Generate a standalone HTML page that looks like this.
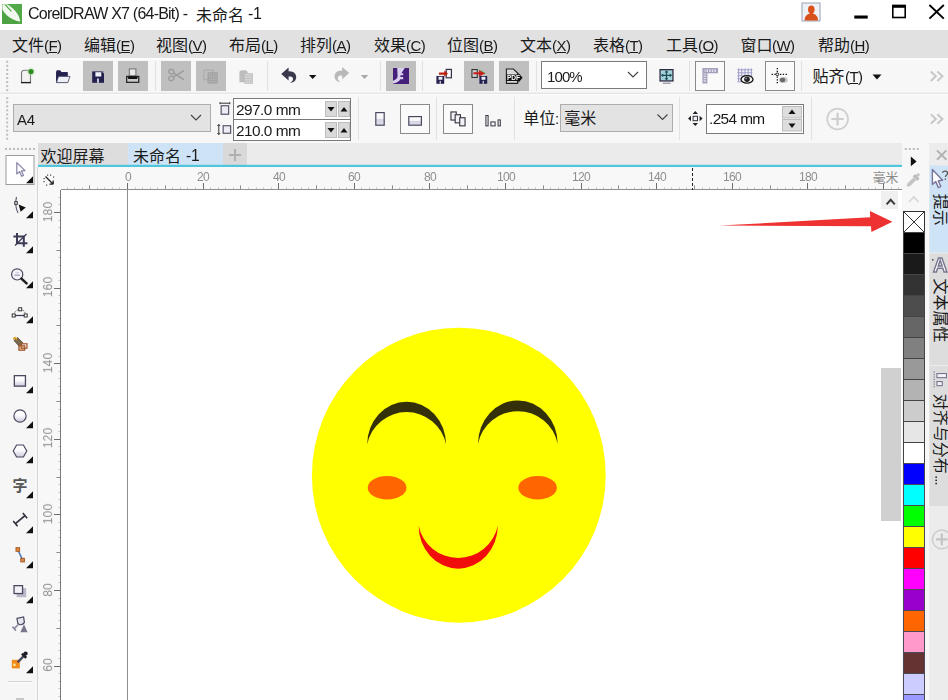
<!DOCTYPE html>
<html><head><meta charset="utf-8"><title>CorelDRAW X7</title>
<style>
html,body{margin:0;padding:0;background:#fff;}
#root{position:relative;width:948px;height:700px;overflow:hidden;font-family:"Liberation Sans",sans-serif;background:#fff;}
#root svg.bg{position:absolute;left:0;top:0;}
#root svg.bg text{font-family:"Liberation Sans","Noto Sans CJK SC",sans-serif;}
.t{position:absolute;will-change:transform;white-space:nowrap;font-family:"Liberation Sans",sans-serif;}
</style></head><body>
<div id="root">
<svg class="bg" width="948" height="700" viewBox="0 0 948 700">
<rect x="0" y="0" width="948" height="30" fill="#ffffff" />
<rect x="0" y="30" width="948" height="28" fill="#e1e1e1" />
<rect x="0" y="58" width="948" height="35" fill="#f7f7f7" />
<rect x="0" y="93" width="948" height="50" fill="#f7f7f7" />
<line x1="0" y1="93.3" x2="948" y2="93.3" stroke="#dcdcdc" stroke-width="1" />
<line x1="0" y1="94.4" x2="948" y2="94.4" stroke="#fcfcfc" stroke-width="1" />
<line x1="0" y1="59" x2="948" y2="59" stroke="#fcfcfc" stroke-width="2" />
<rect x="0" y="143" width="948" height="24" fill="#ebebeb" />
<rect x="38" y="143" width="90" height="22" fill="#dddddd" />
<rect x="0" y="143" width="38" height="557" fill="#f6f6f6" />
<rect x="38" y="167" width="864" height="533" fill="#ffffff" />
<rect x="902" y="143" width="26" height="557" fill="#f7f7f7" />
<rect x="928" y="143" width="20" height="557" fill="#e6e6e6" />
<rect x="2" y="4" width="20" height="20" fill="#53a947" />
<path d="M2.4 4.2 L7 4.2 C13.5 8 19.4 14 20.2 21.6 C12.5 20.4 5 15 2.4 9.2 Z" fill="#f3f9f1" />
<path d="M5.2 4.6 L11.4 11.4" fill="none" stroke="#53a947" stroke-width="1.3" />
<path d="M2 10.5 C5 16 10 20 17 21.8 L17 24 L2 24 Z" fill="#4a9c40" opacity="0.55"/>
<text x="196" y="20.8" font-size="16" fill="#1a1a1a">未命名</text>
<rect x="802.0" y="3.0" width="18" height="18" fill="#eef1f6" stroke="#9aa3b4" stroke-width="1" />
<path d="M804.6 20.6 C804.6 16.4 806.6 14.6 809.4 13.8 L813.2 13.8 C816 14.6 818 16.4 818 20.6 Z" fill="#d8501c" />
<ellipse cx="811.3" cy="9.4" rx="3.3" ry="4" fill="#dc531e"/>
<rect x="809.6" y="11.5" width="3.4" height="3.5" fill="#d8501c" />
<rect x="854.3" y="15.5" width="13.4" height="3.1" fill="#000" />
<rect x="892.8" y="5.6" width="12.4" height="11.9" fill="none" stroke="#000" stroke-width="1.6" />
<rect x="892" y="4.8" width="14" height="3" fill="#000" />
<path d="M929.4 5 L943.8 18.6 M943.8 5 L929.4 18.6" fill="none" stroke="#000" stroke-width="1.9" />
<text x="12" y="50.5" font-size="16" fill="#1a1a1a">文件</text>
<text x="84" y="50.5" font-size="16" fill="#1a1a1a">编辑</text>
<text x="156" y="50.5" font-size="16" fill="#1a1a1a">视图</text>
<text x="229" y="50.5" font-size="16" fill="#1a1a1a">布局</text>
<text x="300" y="50.5" font-size="16" fill="#1a1a1a">排列</text>
<text x="374" y="50.5" font-size="16" fill="#1a1a1a">效果</text>
<text x="447" y="50.5" font-size="16" fill="#1a1a1a">位图</text>
<text x="520" y="50.5" font-size="16" fill="#1a1a1a">文本</text>
<text x="593" y="50.5" font-size="16" fill="#1a1a1a">表格</text>
<text x="666" y="50.5" font-size="16" fill="#1a1a1a">工具</text>
<text x="740.6" y="50.5" font-size="16" fill="#1a1a1a">窗口</text>
<text x="818" y="50.5" font-size="16" fill="#1a1a1a">帮助</text>
<rect x="6.2" y="60.8" width="2" height="2" fill="#bdbdbd" />
<rect x="6.2" y="64.85" width="2" height="2" fill="#bdbdbd" />
<rect x="6.2" y="68.89999999999999" width="2" height="2" fill="#bdbdbd" />
<rect x="6.2" y="72.94999999999999" width="2" height="2" fill="#bdbdbd" />
<rect x="6.2" y="76.99999999999999" width="2" height="2" fill="#bdbdbd" />
<rect x="6.2" y="81.04999999999998" width="2" height="2" fill="#bdbdbd" />
<rect x="6.2" y="85.09999999999998" width="2" height="2" fill="#bdbdbd" />
<rect x="6.2" y="89.14999999999998" width="2" height="2" fill="#bdbdbd" />
<rect x="83" y="61" width="30" height="30" fill="#bfbfbf" />
<rect x="118" y="61" width="30" height="30" fill="#bfbfbf" />
<rect x="161" y="61" width="30" height="30" fill="#bfbfbf" />
<rect x="196" y="61" width="30" height="30" fill="#bfbfbf" />
<rect x="386" y="61" width="30" height="30" fill="#bfbfbf" />
<rect x="464" y="61" width="30" height="30" fill="#bfbfbf" />
<rect x="499" y="61" width="30" height="30" fill="#bfbfbf" />
<line x1="155.5" y1="61" x2="155.5" y2="91" stroke="#e2e2e2" stroke-width="1" />
<line x1="267.5" y1="61" x2="267.5" y2="91" stroke="#e2e2e2" stroke-width="1" />
<line x1="380.5" y1="61" x2="380.5" y2="91" stroke="#e2e2e2" stroke-width="1" />
<line x1="422.5" y1="61" x2="422.5" y2="91" stroke="#e2e2e2" stroke-width="1" />
<line x1="536.5" y1="61" x2="536.5" y2="91" stroke="#e2e2e2" stroke-width="1" />
<line x1="689.5" y1="61" x2="689.5" y2="91" stroke="#e2e2e2" stroke-width="1" />
<line x1="801.5" y1="61" x2="801.5" y2="91" stroke="#e2e2e2" stroke-width="1" />
<rect x="541.5" y="61.5" width="105" height="27" fill="#ffffff" stroke="#7a7a7a" stroke-width="1" />
<path d="M628 72 L633 77 L638 72" fill="none" stroke="#444" stroke-width="1.2" />
<rect x="695.5" y="61.5" width="29" height="29" fill="#fafafa" stroke="#8a8a8a" stroke-width="1" />
<rect x="765.5" y="61.5" width="29" height="29" fill="#fafafa" stroke="#8a8a8a" stroke-width="1" />
<text x="812.5" y="82" font-size="16" fill="#1a1a1a">贴齐</text>
<path d="M872.5 74.5 L881.5 74.5 L877 79.5 Z" fill="#111" />
<path d="M930.8 71.5 L935.8 76.3 L930.8 81 M937.4 71.5 L942.4 76.3 L937.4 81" fill="none" stroke="#c8c8c8" stroke-width="2" />
<rect x="6.2" y="97.2" width="2" height="2" fill="#bdbdbd" />
<rect x="6.2" y="101.25" width="2" height="2" fill="#bdbdbd" />
<rect x="6.2" y="105.3" width="2" height="2" fill="#bdbdbd" />
<rect x="6.2" y="109.35" width="2" height="2" fill="#bdbdbd" />
<rect x="6.2" y="113.39999999999999" width="2" height="2" fill="#bdbdbd" />
<rect x="6.2" y="117.44999999999999" width="2" height="2" fill="#bdbdbd" />
<rect x="6.2" y="121.49999999999999" width="2" height="2" fill="#bdbdbd" />
<rect x="6.2" y="125.54999999999998" width="2" height="2" fill="#bdbdbd" />
<rect x="6.2" y="129.6" width="2" height="2" fill="#bdbdbd" />
<rect x="6.2" y="133.65" width="2" height="2" fill="#bdbdbd" />
<rect x="6.2" y="137.70000000000002" width="2" height="2" fill="#bdbdbd" />
<rect x="13.5" y="104.5" width="197" height="27" fill="#e3e3e3" stroke="#adadad" stroke-width="1" />
<path d="M191 115 L196 120 L201 115" fill="none" stroke="#444" stroke-width="1.2" />
<rect x="233.5" y="98.5" width="117" height="42" fill="#ffffff" stroke="#7a7a7a" stroke-width="1" />
<line x1="233" y1="119.5" x2="351" y2="119.5" stroke="#7a7a7a" stroke-width="1" />
<rect x="325.5" y="101.5" width="11" height="15" fill="#d9d9d9" stroke="#bdbdbd" stroke-width="1" />
<rect x="338.5" y="101.5" width="11" height="15" fill="#d9d9d9" stroke="#bdbdbd" stroke-width="1" />
<path d="M327.5 107 L334.5 107 L331 111.5 Z" fill="#111" />
<path d="M340.5 111.5 L347.5 111.5 L344 107 Z" fill="#111" />
<rect x="325.5" y="122.5" width="11" height="15" fill="#d9d9d9" stroke="#bdbdbd" stroke-width="1" />
<rect x="338.5" y="122.5" width="11" height="15" fill="#d9d9d9" stroke="#bdbdbd" stroke-width="1" />
<path d="M327.5 128 L334.5 128 L331 132.5 Z" fill="#111" />
<path d="M340.5 132.5 L347.5 132.5 L344 128 Z" fill="#111" />
<line x1="358.5" y1="97" x2="358.5" y2="140" stroke="#e2e2e2" stroke-width="1" />
<line x1="436.5" y1="97" x2="436.5" y2="140" stroke="#e2e2e2" stroke-width="1" />
<line x1="514.5" y1="97" x2="514.5" y2="140" stroke="#e2e2e2" stroke-width="1" />
<line x1="679.5" y1="97" x2="679.5" y2="140" stroke="#e2e2e2" stroke-width="1" />
<line x1="811.5" y1="97" x2="811.5" y2="140" stroke="#e2e2e2" stroke-width="1" />
<rect x="400.5" y="104.5" width="29" height="29" fill="#fafafa" stroke="#8a8a8a" stroke-width="1" />
<rect x="443.5" y="104.5" width="29" height="29" fill="#fafafa" stroke="#8a8a8a" stroke-width="1" />
<text x="523.3" y="124" font-size="16" fill="#1a1a1a">单位</text>
<rect x="560.5" y="104.5" width="112" height="27" fill="#e3e3e3" stroke="#adadad" stroke-width="1" />
<text x="564.3" y="124" font-size="16" fill="#1a1a1a">毫米</text>
<path d="M657.5 114.5 L662.5 119.5 L667.5 114.5" fill="none" stroke="#444" stroke-width="1.2" />
<rect x="706.5" y="104.5" width="97" height="29" fill="#ffffff" stroke="#7a7a7a" stroke-width="1" />
<rect x="782.5" y="106.5" width="19" height="11.5" fill="#dddddd" stroke="#bdbdbd" stroke-width="1" />
<rect x="782.5" y="119.5" width="19" height="11.5" fill="#dddddd" stroke="#bdbdbd" stroke-width="1" />
<path d="M788.5 114 L795.5 114 L792 109.5 Z" fill="#111" />
<path d="M788.5 123.5 L795.5 123.5 L792 128 Z" fill="#111" />
<circle cx="837.6" cy="119" r="10.4" fill="none" stroke="#d0d0d0" stroke-width="1.8"/>
<path d="M831.4 119 L843.8 119 M837.6 112.8 L837.6 125.2" fill="none" stroke="#cdcdcd" stroke-width="2.2" />
<path d="M930.8 114.2 L935.8 119 L930.8 123.8 M937.4 114.2 L942.4 119 L937.4 123.8" fill="none" stroke="#c8c8c8" stroke-width="2" />
<rect x="5" y="148" width="2" height="2" fill="#bdbdbd" />
<rect x="9" y="148" width="2" height="2" fill="#bdbdbd" />
<rect x="13" y="148" width="2" height="2" fill="#bdbdbd" />
<rect x="17" y="148" width="2" height="2" fill="#bdbdbd" />
<rect x="21" y="148" width="2" height="2" fill="#bdbdbd" />
<rect x="25" y="148" width="2" height="2" fill="#bdbdbd" />
<rect x="29" y="148" width="2" height="2" fill="#bdbdbd" />
<rect x="33" y="148" width="2" height="2" fill="#bdbdbd" />
<text x="40.5" y="161.5" font-size="16" fill="#1a1a1a">欢迎屏幕</text>
<rect x="128" y="143" width="95" height="22" fill="#cfe3f6" />
<text x="133" y="161.5" font-size="16" fill="#1a1a1a">未命名</text>
<rect x="223" y="143" width="24" height="22" fill="#d9d9d9" />
<path d="M229 155 L241 155 M235 149 L235 161" fill="none" stroke="#b0b0b0" stroke-width="2" />
<rect x="38" y="164.8" width="864" height="2.3" fill="#4fc6dc" />
<rect x="38" y="167" width="864" height="23" fill="#f9f8f8" />
<rect x="38" y="167" width="23" height="533" fill="#f9f8f8" />
<line x1="67.5" y1="187.4" x2="67.5" y2="189" stroke="#c6c6c6" stroke-width="1" />
<line x1="74.5" y1="187.4" x2="74.5" y2="189" stroke="#c6c6c6" stroke-width="1" />
<line x1="82.5" y1="187.4" x2="82.5" y2="189" stroke="#c6c6c6" stroke-width="1" />
<line x1="89.5" y1="185.4" x2="89.5" y2="189" stroke="#8c8c8c" stroke-width="1" />
<line x1="97.5" y1="187.4" x2="97.5" y2="189" stroke="#c6c6c6" stroke-width="1" />
<line x1="104.5" y1="187.4" x2="104.5" y2="189" stroke="#c6c6c6" stroke-width="1" />
<line x1="112.5" y1="187.4" x2="112.5" y2="189" stroke="#c6c6c6" stroke-width="1" />
<line x1="119.5" y1="187.4" x2="119.5" y2="189" stroke="#c6c6c6" stroke-width="1" />
<line x1="127.5" y1="183" x2="127.5" y2="189" stroke="#6e6e6e" stroke-width="1" />
<line x1="135.5" y1="187.4" x2="135.5" y2="189" stroke="#c6c6c6" stroke-width="1" />
<line x1="142.5" y1="187.4" x2="142.5" y2="189" stroke="#c6c6c6" stroke-width="1" />
<line x1="150.5" y1="187.4" x2="150.5" y2="189" stroke="#c6c6c6" stroke-width="1" />
<line x1="157.5" y1="187.4" x2="157.5" y2="189" stroke="#c6c6c6" stroke-width="1" />
<line x1="165.5" y1="185.4" x2="165.5" y2="189" stroke="#8c8c8c" stroke-width="1" />
<line x1="172.5" y1="187.4" x2="172.5" y2="189" stroke="#c6c6c6" stroke-width="1" />
<line x1="180.5" y1="187.4" x2="180.5" y2="189" stroke="#c6c6c6" stroke-width="1" />
<line x1="187.5" y1="187.4" x2="187.5" y2="189" stroke="#c6c6c6" stroke-width="1" />
<line x1="195.5" y1="187.4" x2="195.5" y2="189" stroke="#c6c6c6" stroke-width="1" />
<line x1="203.5" y1="183" x2="203.5" y2="189" stroke="#6e6e6e" stroke-width="1" />
<line x1="210.5" y1="187.4" x2="210.5" y2="189" stroke="#c6c6c6" stroke-width="1" />
<line x1="218.5" y1="187.4" x2="218.5" y2="189" stroke="#c6c6c6" stroke-width="1" />
<line x1="225.5" y1="187.4" x2="225.5" y2="189" stroke="#c6c6c6" stroke-width="1" />
<line x1="233.5" y1="187.4" x2="233.5" y2="189" stroke="#c6c6c6" stroke-width="1" />
<line x1="240.5" y1="185.4" x2="240.5" y2="189" stroke="#8c8c8c" stroke-width="1" />
<line x1="248.5" y1="187.4" x2="248.5" y2="189" stroke="#c6c6c6" stroke-width="1" />
<line x1="256.5" y1="187.4" x2="256.5" y2="189" stroke="#c6c6c6" stroke-width="1" />
<line x1="263.5" y1="187.4" x2="263.5" y2="189" stroke="#c6c6c6" stroke-width="1" />
<line x1="271.5" y1="187.4" x2="271.5" y2="189" stroke="#c6c6c6" stroke-width="1" />
<line x1="278.5" y1="183" x2="278.5" y2="189" stroke="#6e6e6e" stroke-width="1" />
<line x1="286.5" y1="187.4" x2="286.5" y2="189" stroke="#c6c6c6" stroke-width="1" />
<line x1="293.5" y1="187.4" x2="293.5" y2="189" stroke="#c6c6c6" stroke-width="1" />
<line x1="301.5" y1="187.4" x2="301.5" y2="189" stroke="#c6c6c6" stroke-width="1" />
<line x1="308.5" y1="187.4" x2="308.5" y2="189" stroke="#c6c6c6" stroke-width="1" />
<line x1="316.5" y1="185.4" x2="316.5" y2="189" stroke="#8c8c8c" stroke-width="1" />
<line x1="324.5" y1="187.4" x2="324.5" y2="189" stroke="#c6c6c6" stroke-width="1" />
<line x1="331.5" y1="187.4" x2="331.5" y2="189" stroke="#c6c6c6" stroke-width="1" />
<line x1="339.5" y1="187.4" x2="339.5" y2="189" stroke="#c6c6c6" stroke-width="1" />
<line x1="346.5" y1="187.4" x2="346.5" y2="189" stroke="#c6c6c6" stroke-width="1" />
<line x1="354.5" y1="183" x2="354.5" y2="189" stroke="#6e6e6e" stroke-width="1" />
<line x1="361.5" y1="187.4" x2="361.5" y2="189" stroke="#c6c6c6" stroke-width="1" />
<line x1="369.5" y1="187.4" x2="369.5" y2="189" stroke="#c6c6c6" stroke-width="1" />
<line x1="376.5" y1="187.4" x2="376.5" y2="189" stroke="#c6c6c6" stroke-width="1" />
<line x1="384.5" y1="187.4" x2="384.5" y2="189" stroke="#c6c6c6" stroke-width="1" />
<line x1="392.5" y1="185.4" x2="392.5" y2="189" stroke="#8c8c8c" stroke-width="1" />
<line x1="399.5" y1="187.4" x2="399.5" y2="189" stroke="#c6c6c6" stroke-width="1" />
<line x1="407.5" y1="187.4" x2="407.5" y2="189" stroke="#c6c6c6" stroke-width="1" />
<line x1="414.5" y1="187.4" x2="414.5" y2="189" stroke="#c6c6c6" stroke-width="1" />
<line x1="422.5" y1="187.4" x2="422.5" y2="189" stroke="#c6c6c6" stroke-width="1" />
<line x1="429.5" y1="183" x2="429.5" y2="189" stroke="#6e6e6e" stroke-width="1" />
<line x1="437.5" y1="187.4" x2="437.5" y2="189" stroke="#c6c6c6" stroke-width="1" />
<line x1="445.5" y1="187.4" x2="445.5" y2="189" stroke="#c6c6c6" stroke-width="1" />
<line x1="452.5" y1="187.4" x2="452.5" y2="189" stroke="#c6c6c6" stroke-width="1" />
<line x1="460.5" y1="187.4" x2="460.5" y2="189" stroke="#c6c6c6" stroke-width="1" />
<line x1="467.5" y1="185.4" x2="467.5" y2="189" stroke="#8c8c8c" stroke-width="1" />
<line x1="475.5" y1="187.4" x2="475.5" y2="189" stroke="#c6c6c6" stroke-width="1" />
<line x1="482.5" y1="187.4" x2="482.5" y2="189" stroke="#c6c6c6" stroke-width="1" />
<line x1="490.5" y1="187.4" x2="490.5" y2="189" stroke="#c6c6c6" stroke-width="1" />
<line x1="497.5" y1="187.4" x2="497.5" y2="189" stroke="#c6c6c6" stroke-width="1" />
<line x1="505.5" y1="183" x2="505.5" y2="189" stroke="#6e6e6e" stroke-width="1" />
<line x1="513.5" y1="187.4" x2="513.5" y2="189" stroke="#c6c6c6" stroke-width="1" />
<line x1="520.5" y1="187.4" x2="520.5" y2="189" stroke="#c6c6c6" stroke-width="1" />
<line x1="528.5" y1="187.4" x2="528.5" y2="189" stroke="#c6c6c6" stroke-width="1" />
<line x1="535.5" y1="187.4" x2="535.5" y2="189" stroke="#c6c6c6" stroke-width="1" />
<line x1="543.5" y1="185.4" x2="543.5" y2="189" stroke="#8c8c8c" stroke-width="1" />
<line x1="550.5" y1="187.4" x2="550.5" y2="189" stroke="#c6c6c6" stroke-width="1" />
<line x1="558.5" y1="187.4" x2="558.5" y2="189" stroke="#c6c6c6" stroke-width="1" />
<line x1="565.5" y1="187.4" x2="565.5" y2="189" stroke="#c6c6c6" stroke-width="1" />
<line x1="573.5" y1="187.4" x2="573.5" y2="189" stroke="#c6c6c6" stroke-width="1" />
<line x1="581.5" y1="183" x2="581.5" y2="189" stroke="#6e6e6e" stroke-width="1" />
<line x1="588.5" y1="187.4" x2="588.5" y2="189" stroke="#c6c6c6" stroke-width="1" />
<line x1="596.5" y1="187.4" x2="596.5" y2="189" stroke="#c6c6c6" stroke-width="1" />
<line x1="603.5" y1="187.4" x2="603.5" y2="189" stroke="#c6c6c6" stroke-width="1" />
<line x1="611.5" y1="187.4" x2="611.5" y2="189" stroke="#c6c6c6" stroke-width="1" />
<line x1="618.5" y1="185.4" x2="618.5" y2="189" stroke="#8c8c8c" stroke-width="1" />
<line x1="626.5" y1="187.4" x2="626.5" y2="189" stroke="#c6c6c6" stroke-width="1" />
<line x1="634.5" y1="187.4" x2="634.5" y2="189" stroke="#c6c6c6" stroke-width="1" />
<line x1="641.5" y1="187.4" x2="641.5" y2="189" stroke="#c6c6c6" stroke-width="1" />
<line x1="649.5" y1="187.4" x2="649.5" y2="189" stroke="#c6c6c6" stroke-width="1" />
<line x1="656.5" y1="183" x2="656.5" y2="189" stroke="#6e6e6e" stroke-width="1" />
<line x1="664.5" y1="187.4" x2="664.5" y2="189" stroke="#c6c6c6" stroke-width="1" />
<line x1="671.5" y1="187.4" x2="671.5" y2="189" stroke="#c6c6c6" stroke-width="1" />
<line x1="679.5" y1="187.4" x2="679.5" y2="189" stroke="#c6c6c6" stroke-width="1" />
<line x1="686.5" y1="187.4" x2="686.5" y2="189" stroke="#c6c6c6" stroke-width="1" />
<line x1="694.5" y1="185.4" x2="694.5" y2="189" stroke="#8c8c8c" stroke-width="1" />
<line x1="702.5" y1="187.4" x2="702.5" y2="189" stroke="#c6c6c6" stroke-width="1" />
<line x1="709.5" y1="187.4" x2="709.5" y2="189" stroke="#c6c6c6" stroke-width="1" />
<line x1="717.5" y1="187.4" x2="717.5" y2="189" stroke="#c6c6c6" stroke-width="1" />
<line x1="724.5" y1="187.4" x2="724.5" y2="189" stroke="#c6c6c6" stroke-width="1" />
<line x1="732.5" y1="183" x2="732.5" y2="189" stroke="#6e6e6e" stroke-width="1" />
<line x1="739.5" y1="187.4" x2="739.5" y2="189" stroke="#c6c6c6" stroke-width="1" />
<line x1="747.5" y1="187.4" x2="747.5" y2="189" stroke="#c6c6c6" stroke-width="1" />
<line x1="754.5" y1="187.4" x2="754.5" y2="189" stroke="#c6c6c6" stroke-width="1" />
<line x1="762.5" y1="187.4" x2="762.5" y2="189" stroke="#c6c6c6" stroke-width="1" />
<line x1="770.5" y1="185.4" x2="770.5" y2="189" stroke="#8c8c8c" stroke-width="1" />
<line x1="777.5" y1="187.4" x2="777.5" y2="189" stroke="#c6c6c6" stroke-width="1" />
<line x1="785.5" y1="187.4" x2="785.5" y2="189" stroke="#c6c6c6" stroke-width="1" />
<line x1="792.5" y1="187.4" x2="792.5" y2="189" stroke="#c6c6c6" stroke-width="1" />
<line x1="800.5" y1="187.4" x2="800.5" y2="189" stroke="#c6c6c6" stroke-width="1" />
<line x1="807.5" y1="183" x2="807.5" y2="189" stroke="#6e6e6e" stroke-width="1" />
<line x1="815.5" y1="187.4" x2="815.5" y2="189" stroke="#c6c6c6" stroke-width="1" />
<line x1="823.5" y1="187.4" x2="823.5" y2="189" stroke="#c6c6c6" stroke-width="1" />
<line x1="830.5" y1="187.4" x2="830.5" y2="189" stroke="#c6c6c6" stroke-width="1" />
<line x1="838.5" y1="187.4" x2="838.5" y2="189" stroke="#c6c6c6" stroke-width="1" />
<line x1="845.5" y1="185.4" x2="845.5" y2="189" stroke="#8c8c8c" stroke-width="1" />
<line x1="853.5" y1="187.4" x2="853.5" y2="189" stroke="#c6c6c6" stroke-width="1" />
<line x1="860.5" y1="187.4" x2="860.5" y2="189" stroke="#c6c6c6" stroke-width="1" />
<line x1="868.5" y1="187.4" x2="868.5" y2="189" stroke="#c6c6c6" stroke-width="1" />
<line x1="875.5" y1="187.4" x2="875.5" y2="189" stroke="#c6c6c6" stroke-width="1" />
<line x1="883.5" y1="183" x2="883.5" y2="189" stroke="#6e6e6e" stroke-width="1" />
<line x1="891.5" y1="187.4" x2="891.5" y2="189" stroke="#c6c6c6" stroke-width="1" />
<line x1="898.5" y1="187.4" x2="898.5" y2="189" stroke="#c6c6c6" stroke-width="1" />
<line x1="61" y1="189.5" x2="902" y2="189.5" stroke="#8f8f8f" stroke-width="1" />
<text x="872.7" y="181.5" font-size="12.8" fill="#8a8a8a">毫米</text>
<line x1="692.5" y1="168" x2="692.5" y2="190" stroke="#222" stroke-width="1" stroke-dasharray="3 2"/>
<line x1="58.4" y1="197.5" x2="60" y2="197.5" stroke="#c6c6c6" stroke-width="1" />
<line x1="58.4" y1="204.5" x2="60" y2="204.5" stroke="#c6c6c6" stroke-width="1" />
<line x1="54" y1="212.5" x2="60" y2="212.5" stroke="#6e6e6e" stroke-width="1" />
<line x1="58.4" y1="220.5" x2="60" y2="220.5" stroke="#c6c6c6" stroke-width="1" />
<line x1="58.4" y1="227.5" x2="60" y2="227.5" stroke="#c6c6c6" stroke-width="1" />
<line x1="58.4" y1="235.5" x2="60" y2="235.5" stroke="#c6c6c6" stroke-width="1" />
<line x1="58.4" y1="242.5" x2="60" y2="242.5" stroke="#c6c6c6" stroke-width="1" />
<line x1="56.4" y1="250.5" x2="60" y2="250.5" stroke="#8c8c8c" stroke-width="1" />
<line x1="58.4" y1="257.5" x2="60" y2="257.5" stroke="#c6c6c6" stroke-width="1" />
<line x1="58.4" y1="265.5" x2="60" y2="265.5" stroke="#c6c6c6" stroke-width="1" />
<line x1="58.4" y1="272.5" x2="60" y2="272.5" stroke="#c6c6c6" stroke-width="1" />
<line x1="58.4" y1="280.5" x2="60" y2="280.5" stroke="#c6c6c6" stroke-width="1" />
<line x1="54" y1="288.5" x2="60" y2="288.5" stroke="#6e6e6e" stroke-width="1" />
<line x1="58.4" y1="295.5" x2="60" y2="295.5" stroke="#c6c6c6" stroke-width="1" />
<line x1="58.4" y1="303.5" x2="60" y2="303.5" stroke="#c6c6c6" stroke-width="1" />
<line x1="58.4" y1="310.5" x2="60" y2="310.5" stroke="#c6c6c6" stroke-width="1" />
<line x1="58.4" y1="318.5" x2="60" y2="318.5" stroke="#c6c6c6" stroke-width="1" />
<line x1="56.4" y1="325.5" x2="60" y2="325.5" stroke="#8c8c8c" stroke-width="1" />
<line x1="58.4" y1="333.5" x2="60" y2="333.5" stroke="#c6c6c6" stroke-width="1" />
<line x1="58.4" y1="341.5" x2="60" y2="341.5" stroke="#c6c6c6" stroke-width="1" />
<line x1="58.4" y1="348.5" x2="60" y2="348.5" stroke="#c6c6c6" stroke-width="1" />
<line x1="58.4" y1="356.5" x2="60" y2="356.5" stroke="#c6c6c6" stroke-width="1" />
<line x1="54" y1="363.5" x2="60" y2="363.5" stroke="#6e6e6e" stroke-width="1" />
<line x1="58.4" y1="371.5" x2="60" y2="371.5" stroke="#c6c6c6" stroke-width="1" />
<line x1="58.4" y1="378.5" x2="60" y2="378.5" stroke="#c6c6c6" stroke-width="1" />
<line x1="58.4" y1="386.5" x2="60" y2="386.5" stroke="#c6c6c6" stroke-width="1" />
<line x1="58.4" y1="393.5" x2="60" y2="393.5" stroke="#c6c6c6" stroke-width="1" />
<line x1="56.4" y1="401.5" x2="60" y2="401.5" stroke="#8c8c8c" stroke-width="1" />
<line x1="58.4" y1="409.5" x2="60" y2="409.5" stroke="#c6c6c6" stroke-width="1" />
<line x1="58.4" y1="416.5" x2="60" y2="416.5" stroke="#c6c6c6" stroke-width="1" />
<line x1="58.4" y1="424.5" x2="60" y2="424.5" stroke="#c6c6c6" stroke-width="1" />
<line x1="58.4" y1="431.5" x2="60" y2="431.5" stroke="#c6c6c6" stroke-width="1" />
<line x1="54" y1="439.5" x2="60" y2="439.5" stroke="#6e6e6e" stroke-width="1" />
<line x1="58.4" y1="446.5" x2="60" y2="446.5" stroke="#c6c6c6" stroke-width="1" />
<line x1="58.4" y1="454.5" x2="60" y2="454.5" stroke="#c6c6c6" stroke-width="1" />
<line x1="58.4" y1="461.5" x2="60" y2="461.5" stroke="#c6c6c6" stroke-width="1" />
<line x1="58.4" y1="469.5" x2="60" y2="469.5" stroke="#c6c6c6" stroke-width="1" />
<line x1="56.4" y1="477.5" x2="60" y2="477.5" stroke="#8c8c8c" stroke-width="1" />
<line x1="58.4" y1="484.5" x2="60" y2="484.5" stroke="#c6c6c6" stroke-width="1" />
<line x1="58.4" y1="492.5" x2="60" y2="492.5" stroke="#c6c6c6" stroke-width="1" />
<line x1="58.4" y1="499.5" x2="60" y2="499.5" stroke="#c6c6c6" stroke-width="1" />
<line x1="58.4" y1="507.5" x2="60" y2="507.5" stroke="#c6c6c6" stroke-width="1" />
<line x1="54" y1="514.5" x2="60" y2="514.5" stroke="#6e6e6e" stroke-width="1" />
<line x1="58.4" y1="522.5" x2="60" y2="522.5" stroke="#c6c6c6" stroke-width="1" />
<line x1="58.4" y1="530.5" x2="60" y2="530.5" stroke="#c6c6c6" stroke-width="1" />
<line x1="58.4" y1="537.5" x2="60" y2="537.5" stroke="#c6c6c6" stroke-width="1" />
<line x1="58.4" y1="545.5" x2="60" y2="545.5" stroke="#c6c6c6" stroke-width="1" />
<line x1="56.4" y1="552.5" x2="60" y2="552.5" stroke="#8c8c8c" stroke-width="1" />
<line x1="58.4" y1="560.5" x2="60" y2="560.5" stroke="#c6c6c6" stroke-width="1" />
<line x1="58.4" y1="567.5" x2="60" y2="567.5" stroke="#c6c6c6" stroke-width="1" />
<line x1="58.4" y1="575.5" x2="60" y2="575.5" stroke="#c6c6c6" stroke-width="1" />
<line x1="58.4" y1="582.5" x2="60" y2="582.5" stroke="#c6c6c6" stroke-width="1" />
<line x1="54" y1="590.5" x2="60" y2="590.5" stroke="#6e6e6e" stroke-width="1" />
<line x1="58.4" y1="598.5" x2="60" y2="598.5" stroke="#c6c6c6" stroke-width="1" />
<line x1="58.4" y1="605.5" x2="60" y2="605.5" stroke="#c6c6c6" stroke-width="1" />
<line x1="58.4" y1="613.5" x2="60" y2="613.5" stroke="#c6c6c6" stroke-width="1" />
<line x1="58.4" y1="620.5" x2="60" y2="620.5" stroke="#c6c6c6" stroke-width="1" />
<line x1="56.4" y1="628.5" x2="60" y2="628.5" stroke="#8c8c8c" stroke-width="1" />
<line x1="58.4" y1="635.5" x2="60" y2="635.5" stroke="#c6c6c6" stroke-width="1" />
<line x1="58.4" y1="643.5" x2="60" y2="643.5" stroke="#c6c6c6" stroke-width="1" />
<line x1="58.4" y1="650.5" x2="60" y2="650.5" stroke="#c6c6c6" stroke-width="1" />
<line x1="58.4" y1="658.5" x2="60" y2="658.5" stroke="#c6c6c6" stroke-width="1" />
<line x1="54" y1="666.5" x2="60" y2="666.5" stroke="#6e6e6e" stroke-width="1" />
<line x1="58.4" y1="673.5" x2="60" y2="673.5" stroke="#c6c6c6" stroke-width="1" />
<line x1="58.4" y1="681.5" x2="60" y2="681.5" stroke="#c6c6c6" stroke-width="1" />
<line x1="58.4" y1="688.5" x2="60" y2="688.5" stroke="#c6c6c6" stroke-width="1" />
<line x1="58.4" y1="696.5" x2="60" y2="696.5" stroke="#c6c6c6" stroke-width="1" />
<line x1="60.5" y1="190" x2="60.5" y2="700" stroke="#7a7a7a" stroke-width="1" />
<line x1="37.5" y1="167" x2="37.5" y2="700" stroke="#d6d6d6" stroke-width="1" />
<path d="M45.5 176.5 L53 184 M53.2 184.2 L53.2 180.5 M53.2 184.2 L49.5 184.2" fill="none" stroke="#222" stroke-width="1.3" />
<rect x="47" y="174.5" width="1.2" height="1.2" fill="#444" />
<rect x="50" y="174.5" width="1.2" height="1.2" fill="#444" />
<rect x="43.5" y="178" width="1.2" height="1.2" fill="#444" />
<rect x="43.5" y="181" width="1.2" height="1.2" fill="#444" />
<rect x="53" y="176.5" width="1.2" height="1.2" fill="#444" />
<rect x="46" y="184.5" width="1.2" height="1.2" fill="#444" />
<line x1="127.5" y1="190" x2="127.5" y2="700" stroke="#8e8e8e" stroke-width="1" />
<rect x="6.0" y="155.5" width="28" height="29" fill="#ffffff" stroke="#9c9c9c" stroke-width="1" />
<path d="M33 176.3 L33 183.3 L26 183.3 Z" fill="#111" />
<path d="M33 211.3 L33 218.3 L26 218.3 Z" fill="#111" />
<path d="M33 246.3 L33 253.3 L26 253.3 Z" fill="#111" />
<path d="M33 281.3 L33 288.3 L26 288.3 Z" fill="#111" />
<path d="M33 316.3 L33 323.3 L26 323.3 Z" fill="#111" />
<path d="M33 386.3 L33 393.3 L26 393.3 Z" fill="#111" />
<path d="M33 421.3 L33 428.3 L26 428.3 Z" fill="#111" />
<path d="M33 456.3 L33 463.3 L26 463.3 Z" fill="#111" />
<path d="M33 491.3 L33 498.3 L26 498.3 Z" fill="#111" />
<path d="M33 526.3 L33 533.3 L26 533.3 Z" fill="#111" />
<path d="M33 561.3 L33 568.3 L26 568.3 Z" fill="#111" />
<path d="M33 596.3 L33 603.3 L26 603.3 Z" fill="#111" />
<path d="M33 666.3 L33 673.3 L26 673.3 Z" fill="#111" />
<line x1="8" y1="681.5" x2="32" y2="681.5" stroke="#d6d6d6" stroke-width="1" />
<line x1="8" y1="683" x2="32" y2="683" stroke="#fdfdfd" stroke-width="1" />
<rect x="16" y="698" width="8" height="2" fill="#c6c6c6" />
<path d="M16.8 162.6 L16.8 174 L19.6 171.6 L21.6 176.3 L23.5 175.4 L21.5 170.9 L25 170.6 Z" fill="#ffffff" stroke="#8583a6" stroke-width="1.2" stroke-linejoin="round"/>
<path d="M16.5 197 C15 203 15.5 208 18 213" fill="none" stroke="#55546c" stroke-width="1.1" />
<rect x="14.7" y="201.7" width="2.6" height="2.6" fill="#ffffff" stroke="#333" stroke-width="1" />
<path d="M18.6 204.6 L25.8 207.6 L20.6 211.8 Z" fill="#111" />
<path d="M17 233 L17 243.2 L27.4 243.2 M13.4 236.6 L23.8 236.6 L23.8 246.8" fill="none" stroke="#3b3a55" stroke-width="2" />
<path d="M26.5 234 L15 245.5" fill="none" stroke="#3b3a55" stroke-width="1.2" />
<circle cx="17.2" cy="274.4" r="5.6" fill="#f4f4f8" stroke="#4a4960" stroke-width="1.2"/>
<line x1="14.5" y1="275.2" x2="20" y2="275.2" stroke="#9a99b5" stroke-width="1.2" />
<line x1="15.5" y1="272.8" x2="19" y2="272.8" stroke="#c5c4d8" stroke-width="1" />
<path d="M21.4 278.6 L26.6 283.4" fill="none" stroke="#222" stroke-width="2.6" stroke-linecap="round"/>
<path d="M13.7 315.5 C14.5 311 17 309.5 20.2 309.5 C23.5 309.5 25.3 311.5 25.7 315.5" fill="none" stroke="#6a6982" stroke-width="1" stroke-dasharray="1.6 1.4"/>
<line x1="13.7" y1="315.5" x2="25.7" y2="315.5" stroke="#3b3a55" stroke-width="1.2" />
<rect x="18.7" y="307.8" width="3" height="3" fill="#ffffff" stroke="#333" stroke-width="1" />
<rect x="12.2" y="314.0" width="3" height="3" fill="#ffffff" stroke="#333" stroke-width="1" />
<rect x="24.2" y="314.0" width="3" height="3" fill="#ffffff" stroke="#333" stroke-width="1" />
<path d="M14 340.5 L17.5 337.5 L22.8 342.8 L19.3 346.3 Z" fill="#7a6a4e" stroke="#4a3e28" stroke-width="0.8" />
<path d="M13.2 339.2 L15 337.6 L17 339.6" fill="none" stroke="#d8a020" stroke-width="1.6" />
<rect x="18.900000000000002" y="345.8" width="5.8" height="4.3999999999999995" fill="#e9c9a4" stroke="#a0552a" stroke-width="1.2" />
<rect x="21.200000000000003" y="343.8" width="5.8" height="4.3999999999999995" fill="none" stroke="#a0552a" stroke-width="1.2" />
<defs><linearGradient id="gsh" x1="0" y1="0" x2="0" y2="1"><stop offset="0" stop-color="#ffffff"/><stop offset="0.45" stop-color="#fafafc"/><stop offset="1" stop-color="#c9c8da"/></linearGradient></defs>
<rect x="14.35" y="375.65" width="11.1" height="10.5" fill="url(#gsh)" stroke="#4a4960" stroke-width="1.3" />
<circle cx="20" cy="416" r="6.1" fill="url(#gsh)" stroke="#4a4960" stroke-width="1.2"/>
<path d="M13.2 451 L16.6 445 L23.4 445 L26.8 451 L23.4 457 L16.6 457 Z" fill="url(#gsh)" stroke="#4a4960" stroke-width="1.2" />
<text x="12.4" y="490.6" font-size="15" font-weight="bold" fill="#585858">字</text>
<path d="M15.4 523.6 L25 515.6" fill="none" stroke="#33323f" stroke-width="1.8" />
<path d="M13.2 521 L17.6 526.2 M22.8 513 L27.2 518.2" fill="none" stroke="#33323f" stroke-width="1.6" />
<path d="M17.7 549.4 L22.6 560" fill="none" stroke="#4a78b8" stroke-width="1.5" />
<rect x="16.0" y="547.7" width="3.5999999999999996" height="3.5999999999999996" fill="#e08a3c" stroke="#a85a1e" stroke-width="1" />
<rect x="20.8" y="558.3" width="3.5999999999999996" height="3.5999999999999996" fill="#d58a55" stroke="#a85a1e" stroke-width="1" />
<rect x="16.6" y="588.2" width="9.6" height="9" fill="#b9b8c9" />
<rect x="14.05" y="585.65" width="8.5" height="7.8999999999999995" fill="#f3f3f7" stroke="#4a4960" stroke-width="1.3" />
<path d="M17 618.4 L23.6 617 L24.4 622.4 C23 625 19.6 625.6 17.8 623.4 Z" fill="#e6e6f0" stroke="#4a4960" stroke-width="1.2" />
<path d="M18.6 624.2 L14.2 628.6 M12.4 626.6 L16 630.6" fill="none" stroke="#8a8aa0" stroke-width="1.6" />
<path d="M24 624.2 L27.6 632.2 L20.4 632.2 Z" fill="#77768c" />
<rect x="11.8" y="659.8" width="8" height="8.6" fill="#f08a18" />
<rect x="13.2" y="663.6" width="2.4" height="2.4" fill="#ffe6a0" />
<path d="M17.6 662.4 L23.8 656" fill="none" stroke="#4a4960" stroke-width="2.4" />
<path d="M22 653.6 L26.2 657.8" fill="none" stroke="#1e1e28" stroke-width="2.6" />
<circle cx="25.6" cy="653.6" r="2.1" fill="#1e1e28"/>
<rect x="881" y="191" width="17" height="18" fill="#f0f0f0" />
<path d="M886.6 204.4 L890.7 199.8 L894.8 204.4" fill="none" stroke="#3c3c3c" stroke-width="2" />
<rect x="881" y="368" width="20" height="153" fill="#d0d0d0" />
<rect x="904.8" y="148" width="2" height="2" fill="#bdbdbd" />
<rect x="908.8" y="148" width="2" height="2" fill="#bdbdbd" />
<rect x="912.8" y="148" width="2" height="2" fill="#bdbdbd" />
<rect x="916.8" y="148" width="2" height="2" fill="#bdbdbd" />
<path d="M910.8 156.6 L916.6 161.4 L910.8 166.2 Z" fill="#111" />
<path d="M906.6 186.6 L907.4 183.6 L913.4 177.6 L916 180.2 L910 186.2 Z" fill="#c4c4c4" />
<path d="M912.6 176.4 L915 174 L919.6 178.6 L917.2 181 Z" fill="#bdbdbd" />
<path d="M915.4 175.6 L917.6 173.4 C918.6 172.4 920.6 174.4 919.6 175.4 L917.4 177.6 Z" fill="#c4c4c4" />
<path d="M909 202 L913.8 197 L918.6 202" fill="none" stroke="#d6d6d6" stroke-width="1.8" />
<rect x="903.5" y="211.5" width="21" height="21" fill="#ffffff" stroke="#333" stroke-width="1" />
<path d="M904 212 L924 232 M924 212 L904 232" fill="none" stroke="#333" stroke-width="1" />
<rect x="903.5" y="232.5" width="21" height="21" fill="#000000" stroke="#444444" stroke-width="1" />
<rect x="903.5" y="253.5" width="21" height="21" fill="#1a1a1a" stroke="#444444" stroke-width="1" />
<rect x="903.5" y="274.5" width="21" height="21" fill="#333333" stroke="#444444" stroke-width="1" />
<rect x="903.5" y="295.5" width="21" height="21" fill="#4d4d4d" stroke="#444444" stroke-width="1" />
<rect x="903.5" y="316.5" width="21" height="21" fill="#666666" stroke="#444444" stroke-width="1" />
<rect x="903.5" y="337.5" width="21" height="21" fill="#808080" stroke="#444444" stroke-width="1" />
<rect x="903.5" y="358.5" width="21" height="21" fill="#999999" stroke="#444444" stroke-width="1" />
<rect x="903.5" y="379.5" width="21" height="21" fill="#b3b3b3" stroke="#444444" stroke-width="1" />
<rect x="903.5" y="400.5" width="21" height="21" fill="#cccccc" stroke="#444444" stroke-width="1" />
<rect x="903.5" y="421.5" width="21" height="21" fill="#e6e6e6" stroke="#444444" stroke-width="1" />
<rect x="903.5" y="442.5" width="21" height="21" fill="#ffffff" stroke="#444444" stroke-width="1" />
<rect x="903.5" y="463.5" width="21" height="21" fill="#0000ff" stroke="#4a4a55" stroke-width="1" />
<rect x="903.5" y="484.5" width="21" height="21" fill="#00ffff" stroke="#4a4a55" stroke-width="1" />
<rect x="903.5" y="505.5" width="21" height="21" fill="#00ff00" stroke="#4a4a55" stroke-width="1" />
<rect x="903.5" y="526.5" width="21" height="21" fill="#ffff00" stroke="#4a4a55" stroke-width="1" />
<rect x="903.5" y="547.5" width="21" height="21" fill="#ff0000" stroke="#4a4a55" stroke-width="1" />
<rect x="903.5" y="568.5" width="21" height="21" fill="#ff00ff" stroke="#4a4a55" stroke-width="1" />
<rect x="903.5" y="589.5" width="21" height="21" fill="#9900cc" stroke="#4a4a55" stroke-width="1" />
<rect x="903.5" y="610.5" width="21" height="21" fill="#ff6600" stroke="#4a4a55" stroke-width="1" />
<rect x="903.5" y="631.5" width="21" height="21" fill="#ff99cc" stroke="#4a4a55" stroke-width="1" />
<rect x="903.5" y="652.5" width="21" height="21" fill="#663333" stroke="#4a4a55" stroke-width="1" />
<rect x="903.5" y="673.5" width="21" height="21" fill="#ccccff" stroke="#4a4a55" stroke-width="1" />
<rect x="903.5" y="694.5" width="21" height="21" fill="#9999ff" stroke="#4a4a55" stroke-width="1" />
<rect x="928" y="143" width="20" height="557" fill="#ececec" />
<line x1="928.5" y1="143" x2="928.5" y2="700" stroke="#f8f8f8" stroke-width="1" />
<rect x="929.5" y="165.5" width="18.5" height="87" fill="#cfe3f6" />
<rect x="929.5" y="253.5" width="18.5" height="111.5" fill="#dddddd" />
<rect x="929.5" y="366" width="18.5" height="140" fill="#dddddd" />
<path d="M937 150.4 L946.4 159.8 M946.4 150.4 L937 159.8" fill="none" stroke="#b2b2b2" stroke-width="2" />
<text x="0" y="0" font-size="16" fill="#1a1a1a" transform="translate(935.2 193.8) rotate(90)">提示</text>
<text x="0" y="0" font-size="16" fill="#1a1a1a" transform="translate(935.2 278.6) rotate(90)">文本属性</text>
<text x="0" y="0" font-size="16" fill="#1a1a1a" transform="translate(935.2 393.8) rotate(90)">对齐与分布</text>
<rect x="935.4" y="476.4" width="1.5" height="1.5" fill="#1a1a1a" />
<rect x="935.4" y="479.59999999999997" width="1.5" height="1.5" fill="#1a1a1a" />
<rect x="935.4" y="482.79999999999995" width="1.5" height="1.5" fill="#1a1a1a" />
<path d="M932.4 169.6 L932.4 184.6 L935.8 181.6 L938.4 187.6 L940.8 186.4 L938.2 180.8 L942.6 180.2 Z" fill="#ffffff" stroke="#77759a" stroke-width="1.4" stroke-linejoin="round"/>
<path d="M942.4 172.6 C943.4 170.8 947 170.6 947.6 172.8 C948 174.6 945.6 175 945.4 177" fill="none" stroke="#555" stroke-width="1.3" />
<rect x="944.7" y="178.4" width="1.4" height="1.4" fill="#555" />
<rect x="932" y="259" width="1.6" height="1.6" fill="#55546c" />
<line x1="934.2" y1="371.6" x2="934.2" y2="388" stroke="#77758f" stroke-width="1.2" stroke-dasharray="1.2 1.2"/>
<rect x="936.9499999999999" y="373.55" width="9.5" height="4.1" fill="#f4f4f8" stroke="#77758f" stroke-width="1.1" />
<rect x="936.9499999999999" y="381.55" width="5.300000000000001" height="4.1" fill="#f4f4f8" stroke="#77758f" stroke-width="1.1" />
<circle cx="941.8" cy="539.4" r="9.4" fill="none" stroke="#cdcdcd" stroke-width="1.5"/>
<path d="M936 539.4 L947.6 539.4 M941.8 533.6 L941.8 545.2" fill="none" stroke="#c4c4c4" stroke-width="2.2" />
<ellipse cx="458.8" cy="475.2" rx="146.9" ry="147.5" fill="#ffff00"/>
<path d="M367.20 444.4 A39.4 42.8 0 0 1 446.00 444.4 A40.15 40.0 0 0 0 367.20 444.4 Z" fill="#33300a" />
<path d="M478.00 444.0 A39.85 43.6 0 0 1 557.70 444.0 A40.51 40.0 0 0 0 478.00 444.0 Z" fill="#33300a" />
<ellipse cx="387.1" cy="487.7" rx="19.4" ry="11.7" fill="#ff6600"/>
<ellipse cx="537.6" cy="487.7" rx="19.3" ry="11.7" fill="#ff6600"/>
<path d="M418.60 525.4 A39.6 43.3 0 0 0 497.80 525.4 A40.30 40.0 0 0 1 418.60 525.4 Z" fill="#f20d0d" />
<path d="M719.5 225.6 L870.2 217.3 L869.9 211.1 L892.4 221.8 L871.4 232.1 L871 226.3 Z" fill="#ee3131" />
<path d="M21.5 82.5 L21.5 73 C21.5 71 23 70.2 25 70.2 L28 70.2 L30.5 72.8 L30.5 82.5 Z" fill="#f4f2f0" stroke="#777" stroke-width="1.1" />
<line x1="21" y1="82.6" x2="31" y2="82.6" stroke="#222" stroke-width="1.4" />
<circle cx="31" cy="71.6" r="4.2" fill="#bfe8b4" opacity="0.5"/>
<circle cx="31" cy="71.6" r="2.6" fill="#2c8c22"/>
<path d="M56.2 82.6 L56.2 71.6 C56.2 70.6 57 70.2 57.8 70.2 L60.2 70.2 L61.6 72.2 L67.2 72.2 L67.2 75 L56.2 82.6 Z" fill="#23204e" />
<rect x="56.2" y="72.2" width="11.6" height="10.4" fill="#23204e" />
<path d="M58.6 76.4 L70 76.4 L67.8 82.6 L56.4 82.6 Z" fill="#eef0f8" stroke="#55546c" stroke-width="0.9" />
<rect x="92.2" y="71.4" width="11.8" height="11.4" fill="#23204e" />
<rect x="95.38600000000001" y="72.2" width="5.9" height="4.332" fill="#eef0fa" />
<rect x="97.156" y="78.468" width="1.6520000000000004" height="4.332" fill="#e8e8f4" />
<path d="M101.8 71.4 L104 71.4 L104 73.6 Z" fill="#bfbfbf" />
<rect x="129.3" y="68.9" width="6.6" height="7" fill="#e9e9e9" stroke="#6f6f6f" stroke-width="1" />
<rect x="126.65" y="76.45" width="12.1" height="5.9" fill="#c9c9c9" stroke="#2a2a2a" stroke-width="1.3" />
<path d="M127.4 76.4 L138 76.4 L137 79 L128.4 79 Z" fill="#111" />
<ellipse cx="171.3" cy="71.6" rx="2.6" ry="2.2" fill="none" stroke="#9b9b9b" stroke-width="1.3" transform="rotate(25 171.3 71.6)"/>
<ellipse cx="171.3" cy="78.4" rx="2.6" ry="2.2" fill="none" stroke="#9b9b9b" stroke-width="1.3" transform="rotate(-25 171.3 78.4)"/>
<path d="M173.4 72.8 L183.8 79.6 M173.4 77.2 L183.8 70.6" fill="none" stroke="#9b9b9b" stroke-width="1.5" />
<rect x="203.9" y="70.1" width="9" height="9.6" fill="none" stroke="#a9a9a9" stroke-width="1" />
<rect x="208.1" y="72.9" width="9" height="10" fill="#b4b4b4" stroke="#9f9f9f" stroke-width="1" />
<line x1="210.1" y1="72.4" x2="210.1" y2="83.4" stroke="#a2a2a2" stroke-width="0.8" />
<line x1="207.6" y1="75.15" x2="217.6" y2="75.15" stroke="#a2a2a2" stroke-width="0.8" />
<line x1="212.6" y1="72.4" x2="212.6" y2="83.4" stroke="#a2a2a2" stroke-width="0.8" />
<line x1="207.6" y1="77.9" x2="217.6" y2="77.9" stroke="#a2a2a2" stroke-width="0.8" />
<line x1="215.1" y1="72.4" x2="215.1" y2="83.4" stroke="#a2a2a2" stroke-width="0.8" />
<line x1="207.6" y1="80.65" x2="217.6" y2="80.65" stroke="#a2a2a2" stroke-width="0.8" />
<path d="M239.4 82.2 L239.4 72 C239.4 69.6 247.6 69.6 247.6 72 L247.6 82.2 Z" fill="#bdbdbd" />
<rect x="244.6" y="73.60000000000001" width="7.8" height="9.799999999999999" fill="#d4d4d4" stroke="#c0c0c0" stroke-width="0.8" />
<line x1="244.2" y1="75.8" x2="252.8" y2="75.8" stroke="#bcbcbc" stroke-width="0.8" />
<line x1="244.2" y1="78.4" x2="252.8" y2="78.4" stroke="#bcbcbc" stroke-width="0.8" />
<line x1="244.2" y1="81.0" x2="252.8" y2="81.0" stroke="#bcbcbc" stroke-width="0.8" />
<path d="M281.2 74 L288.6 67.6 L288.6 71.4 C293.4 71 296.4 74 296.2 77.6 C296 81 293.2 83 290.2 82.6 C293 81.6 293.6 79.2 292.6 77.6 C291.8 76.4 290.2 76.2 288.6 76.6 L288.6 80.4 Z" fill="#3a394b" />
<path d="M309 75 L316.4 75 L312.7 79 Z" fill="#111" />
<path d="M349.2 73 L342.2 67 L342.2 70.6 C337.4 70.2 334.4 73.2 334.6 76.8 C334.8 80.2 337.6 82.2 340.6 81.8 C337.8 80.8 337.2 78.4 338.2 76.8 C339 75.6 340.6 75.4 342.2 75.8 L342.2 79.2 Z" fill="#b9b9b9" />
<path d="M360.8 75 L368.2 75 L364.5 79 Z" fill="#a9a9a9" />
<rect x="393" y="68" width="16" height="16" fill="#45207a" />
<path d="M397.2 68 L404.8 68 L401.4 73.2 L403.2 73.2 L403.2 75.2 L400.4 75.2 L400.4 77 L403.2 77 L403.2 79.2 L400.4 79.2 C399.2 81.4 396.4 83 393 83.6 L393 80.8 C395.6 80 397.4 78.4 397.6 76.2 Z" fill="#d9cfee" />
<rect x="446.20000000000005" y="69.39999999999999" width="5.2" height="8.4" fill="#fafafa" stroke="#33324a" stroke-width="1.2" />
<rect x="436.4" y="76" width="7.8" height="7.8" fill="#23204e" />
<rect x="438.506" y="76.8" width="3.9" height="2.964" fill="#eef0fa" />
<rect x="439.676" y="80.836" width="1.092" height="2.964" fill="#e8e8f4" />
<path d="M439 72.4 L444.2 72.4 L444.2 70.4 L448 73.6 L444.2 76.8 L444.2 74.8 L439 74.8 Z" fill="#c0200e" />
<rect x="471.95" y="69.55" width="5.300000000000001" height="7.9" fill="#cfcfcf" stroke="#333" stroke-width="1.1" />
<path d="M473.4 72.2 L479 72.2 L479 69.8 L485.6 73.2 L479 76.6 L479 74.2 L473.4 74.2 Z" fill="#c81e1e" />
<path d="M479 69.8 L485.6 73.2" fill="none" stroke="#6ac86a" stroke-width="0.8" />
<rect x="479.4" y="76" width="7.8" height="7.8" fill="#23204e" />
<rect x="481.506" y="76.8" width="3.9" height="2.964" fill="#eef0fa" />
<rect x="482.676" y="80.836" width="1.092" height="2.964" fill="#e8e8f4" />
<path d="M506.4 83.4 L506.4 69 L513.4 69 L517.6 73 L517.6 83.4 Z" fill="#dadada" stroke="#222" stroke-width="1.1" />
<path d="M506 74.6 L518.4 74.6 L518.4 72.8 L522.6 77.8 L518.4 82.8 L518.4 81 L506 81 Z" fill="#111" />
<rect x="660.05" y="69.65" width="12.899999999999999" height="11.299999999999999" fill="#a4d3da" stroke="#2e2d44" stroke-width="1.3" />
<path d="M661.6 75.3 L671.4 75.3 M666.5 71 L666.5 79.6" fill="none" stroke="#1f4c58" stroke-width="1.3" />
<path d="M661 75.3 L663.2 73.4 L663.2 77.2 Z M672 75.3 L669.8 73.4 L669.8 77.2 Z M666.5 70.2 L664.6 72.4 L668.4 72.4 Z M666.5 80.4 L664.6 78.2 L668.4 78.2 Z" fill="#1f4c58" />
<line x1="662.8" y1="83.2" x2="670.6" y2="83.2" stroke="#8f8f9f" stroke-width="1.2" />
<path d="M702.4 68 L718 68 L718 73.2 L707.4 73.2 L707.4 83.4 L702.4 83.4 Z" fill="#a3a1bb" />
<rect x="704.6" y="69.4" width="12.4" height="2.6" fill="#e4e3ef" />
<rect x="703.6" y="73.4" width="2.6" height="9" fill="#e4e3ef" />
<line x1="706.0" y1="69.2" x2="706.0" y2="72.2" stroke="#8d8ba8" stroke-width="0.9" />
<line x1="708.6" y1="69.2" x2="708.6" y2="72.2" stroke="#8d8ba8" stroke-width="0.9" />
<line x1="711.2" y1="69.2" x2="711.2" y2="72.2" stroke="#8d8ba8" stroke-width="0.9" />
<line x1="713.8" y1="69.2" x2="713.8" y2="72.2" stroke="#8d8ba8" stroke-width="0.9" />
<line x1="716.4" y1="69.2" x2="716.4" y2="72.2" stroke="#8d8ba8" stroke-width="0.9" />
<line x1="703.4" y1="75.0" x2="706.4" y2="75.0" stroke="#8d8ba8" stroke-width="0.9" />
<line x1="703.4" y1="77.4" x2="706.4" y2="77.4" stroke="#8d8ba8" stroke-width="0.9" />
<line x1="703.4" y1="79.8" x2="706.4" y2="79.8" stroke="#8d8ba8" stroke-width="0.9" />
<line x1="703.4" y1="82.2" x2="706.4" y2="82.2" stroke="#8d8ba8" stroke-width="0.9" />
<line x1="738.6" y1="68.4" x2="738.6" y2="81.4" stroke="#9f9dcc" stroke-width="1" />
<line x1="737.4" y1="69.8" x2="752.4" y2="69.8" stroke="#9f9dcc" stroke-width="1" />
<line x1="741.8000000000001" y1="68.4" x2="741.8000000000001" y2="81.4" stroke="#9f9dcc" stroke-width="1" />
<line x1="737.4" y1="72.8" x2="752.4" y2="72.8" stroke="#9f9dcc" stroke-width="1" />
<line x1="745.0" y1="68.4" x2="745.0" y2="81.4" stroke="#9f9dcc" stroke-width="1" />
<line x1="737.4" y1="75.8" x2="752.4" y2="75.8" stroke="#9f9dcc" stroke-width="1" />
<line x1="748.2" y1="68.4" x2="748.2" y2="81.4" stroke="#9f9dcc" stroke-width="1" />
<line x1="737.4" y1="78.8" x2="752.4" y2="78.8" stroke="#9f9dcc" stroke-width="1" />
<line x1="751.4" y1="68.4" x2="751.4" y2="81.4" stroke="#9f9dcc" stroke-width="1" />
<line x1="737.4" y1="81.8" x2="752.4" y2="81.8" stroke="#9f9dcc" stroke-width="1" />
<ellipse cx="747" cy="79.4" rx="6" ry="3.7" fill="#f6f6f6" stroke="#111" stroke-width="1.3"/>
<circle cx="747" cy="79.2" r="2.8" fill="#222"/>
<circle cx="746.2" cy="78.4" r="0.9" fill="#8a8aa0"/>
<line x1="777.3" y1="68" x2="777.3" y2="84" stroke="#111" stroke-width="1.3" stroke-dasharray="1.3 1.5"/>
<line x1="771.6" y1="74.3" x2="787.6" y2="74.3" stroke="#111" stroke-width="1.3" stroke-dasharray="1.3 1.5"/>
<circle cx="777.3" cy="74.3" r="1.4" fill="#fff" stroke="#111" stroke-width="0.9"/>
<ellipse cx="783.4" cy="80" rx="4.4" ry="3" fill="#c6c6c6"/>
<ellipse cx="782.6" cy="80" rx="2.6" ry="2.3" fill="#6a6a6a"/>
<rect x="221.15" y="105.75" width="7.5" height="8.5" fill="#ececf2" stroke="#4a4960" stroke-width="1.1" />
<path d="M220 102.2 L220 104.2 M229.8 102.2 L229.8 104.2 M220 103.2 L229.8 103.2" fill="none" stroke="#333" stroke-width="1" />
<rect x="223.15" y="125.75" width="7.5" height="7.5" fill="#ececf2" stroke="#4a4960" stroke-width="1.1" />
<path d="M218.8 124.6 L218.8 134.4 M217.4 126 L218.8 124.4 L220.2 126 M217.4 133 L218.8 134.6 L220.2 133" fill="none" stroke="#333" stroke-width="1" />
<defs><linearGradient id="gpg" x1="0" y1="0" x2="0" y2="1"><stop offset="0" stop-color="#ffffff"/><stop offset="0.5" stop-color="#f4f4f8"/><stop offset="0.55" stop-color="#d6d5e4"/><stop offset="1" stop-color="#dedde9"/></linearGradient></defs>
<rect x="375.8" y="112.6" width="8.4" height="12.600000000000001" fill="url(#gpg)" stroke="#4a4960" stroke-width="1.2" />
<rect x="408.8" y="116.6" width="12.600000000000001" height="8.600000000000001" fill="url(#gpg)" stroke="#4a4960" stroke-width="1.2" />
<rect x="450.95" y="111.95" width="5.300000000000001" height="8.1" fill="#f3f3f7" stroke="#33323f" stroke-width="1.1" />
<rect x="455.15000000000003" y="114.75" width="5.300000000000001" height="8.1" fill="#f3f3f7" stroke="#33323f" stroke-width="1.1" />
<rect x="459.75" y="117.75" width="5.300000000000001" height="8.1" fill="#f3f3f7" stroke="#33323f" stroke-width="1.1" />
<rect x="485.9" y="115.5" width="2.2" height="10.4" fill="#f3f3f7" stroke="#33323f" stroke-width="1" />
<rect x="490.9" y="121.9" width="4.2" height="4" fill="#f3f3f7" stroke="#33323f" stroke-width="1" />
<rect x="498.1" y="119.9" width="2.2" height="6" fill="#f3f3f7" stroke="#33323f" stroke-width="1" />
<rect x="693.1" y="116.3" width="4.4" height="4.4" fill="#f3f3f7" stroke="#33323f" stroke-width="1" />
<path d="M695.3 111 L698 114 L692.6 114 Z M695.3 126 L698 123 L692.6 123 Z M688 118.5 L691 115.8 L691 121.2 Z M702.6 118.5 L699.6 115.8 L699.6 121.2 Z" fill="#222" />
</svg>
<span class="t" style="left:28.3px;top:5.42px;font-size:16px;line-height:18.38px;color:#1a1a1a;letter-spacing:-0.78px;">CorelDRAW X7 (64-Bit) -</span>
<span class="t" style="left:248px;top:5.42px;font-size:16px;line-height:18.38px;color:#1a1a1a;letter-spacing:-0.3px;">-1</span>
<span class="t" style="left:44.400000000000006px;top:36.82px;font-size:15px;line-height:17.23px;color:#1a1a1a;letter-spacing:-0.55px;">(<u>F</u>)</span>
<span class="t" style="left:116.39999999999999px;top:36.82px;font-size:15px;line-height:17.23px;color:#1a1a1a;letter-spacing:-0.55px;">(<u>E</u>)</span>
<span class="t" style="left:188.39999999999998px;top:36.82px;font-size:15px;line-height:17.23px;color:#1a1a1a;letter-spacing:-0.55px;">(<u>V</u>)</span>
<span class="t" style="left:261.4px;top:36.82px;font-size:15px;line-height:17.23px;color:#1a1a1a;letter-spacing:-0.55px;">(<u>L</u>)</span>
<span class="t" style="left:332.40000000000003px;top:36.82px;font-size:15px;line-height:17.23px;color:#1a1a1a;letter-spacing:-0.55px;">(<u>A</u>)</span>
<span class="t" style="left:406.40000000000003px;top:36.82px;font-size:15px;line-height:17.23px;color:#1a1a1a;letter-spacing:-0.55px;">(<u>C</u>)</span>
<span class="t" style="left:479.40000000000003px;top:36.82px;font-size:15px;line-height:17.23px;color:#1a1a1a;letter-spacing:-0.55px;">(<u>B</u>)</span>
<span class="t" style="left:552.4000000000001px;top:36.82px;font-size:15px;line-height:17.23px;color:#1a1a1a;letter-spacing:-0.55px;">(<u>X</u>)</span>
<span class="t" style="left:625.4000000000001px;top:36.82px;font-size:15px;line-height:17.23px;color:#1a1a1a;letter-spacing:-0.55px;">(<u>T</u>)</span>
<span class="t" style="left:698.4000000000001px;top:36.82px;font-size:15px;line-height:17.23px;color:#1a1a1a;letter-spacing:-0.55px;">(<u>O</u>)</span>
<span class="t" style="left:772.4000000000001px;top:36.82px;font-size:15px;line-height:17.23px;color:#1a1a1a;letter-spacing:-0.55px;">(<u>W</u>)</span>
<span class="t" style="left:850.4000000000001px;top:36.82px;font-size:15px;line-height:17.23px;color:#1a1a1a;letter-spacing:-0.55px;">(<u>H</u>)</span>
<span class="t" style="left:547px;top:67.62px;font-size:15px;line-height:17.23px;color:#1a1a1a;letter-spacing:-0.9px;">100%</span>
<span class="t" style="left:845.1000000000001px;top:68.33px;font-size:15px;line-height:17.23px;color:#1a1a1a;letter-spacing:-0.55px;">(<u>T</u>)</span>
<span class="t" style="left:17.4px;top:110.62px;font-size:15px;line-height:17.23px;color:#1a1a1a;letter-spacing:-0.25px;">A4</span>
<span class="t" style="left:236px;top:100.96px;font-size:15.4px;line-height:17.69px;color:#1a1a1a;letter-spacing:-0.52px;">297.0 mm</span>
<span class="t" style="left:236px;top:121.76px;font-size:15.4px;line-height:17.69px;color:#1a1a1a;letter-spacing:-0.52px;">210.0 mm</span>
<span class="t" style="left:555.4000000000001px;top:109.92px;font-size:15px;line-height:17.23px;color:#1a1a1a;letter-spacing:0px;">:</span>
<span class="t" style="left:709px;top:110.26px;font-size:15.4px;line-height:17.69px;color:#1a1a1a;letter-spacing:-0.62px;">.254 mm</span>
<span class="t" style="left:185.5px;top:146.68px;font-size:15.6px;line-height:17.92px;color:#1a1a1a;letter-spacing:-0.3px;">-1</span>
<span class="t" style="left:107.5px;width:40px;text-align:center;top:171.14px;font-size:12px;line-height:13.8px;color:#8f8f8f;letter-spacing:-0.6px;">0</span>
<span class="t" style="left:183.1px;width:40px;text-align:center;top:171.14px;font-size:12px;line-height:13.8px;color:#8f8f8f;letter-spacing:-0.6px;">20</span>
<span class="t" style="left:258.7px;width:40px;text-align:center;top:171.14px;font-size:12px;line-height:13.8px;color:#8f8f8f;letter-spacing:-0.6px;">40</span>
<span class="t" style="left:334.3px;width:40px;text-align:center;top:171.14px;font-size:12px;line-height:13.8px;color:#8f8f8f;letter-spacing:-0.6px;">60</span>
<span class="t" style="left:409.9px;width:40px;text-align:center;top:171.14px;font-size:12px;line-height:13.8px;color:#8f8f8f;letter-spacing:-0.6px;">80</span>
<span class="t" style="left:485.5px;width:40px;text-align:center;top:171.14px;font-size:12px;line-height:13.8px;color:#8f8f8f;letter-spacing:-0.6px;">100</span>
<span class="t" style="left:561.1px;width:40px;text-align:center;top:171.14px;font-size:12px;line-height:13.8px;color:#8f8f8f;letter-spacing:-0.6px;">120</span>
<span class="t" style="left:636.7px;width:40px;text-align:center;top:171.14px;font-size:12px;line-height:13.8px;color:#8f8f8f;letter-spacing:-0.6px;">140</span>
<span class="t" style="left:712.3px;width:40px;text-align:center;top:171.14px;font-size:12px;line-height:13.8px;color:#8f8f8f;letter-spacing:-0.6px;">160</span>
<span class="t" style="left:787.9px;width:40px;text-align:center;top:171.14px;font-size:12px;line-height:13.8px;color:#8f8f8f;letter-spacing:-0.6px;">180</span>
<span class="t" style="left:28.6px;top:204.5px;width:40px;text-align:center;font-size:12px;line-height:13.8px;color:#8f8f8f;letter-spacing:0.15px;transform:rotate(-90deg);">180</span>
<span class="t" style="left:28.6px;top:280.1px;width:40px;text-align:center;font-size:12px;line-height:13.8px;color:#8f8f8f;letter-spacing:0.15px;transform:rotate(-90deg);">160</span>
<span class="t" style="left:28.6px;top:355.7px;width:40px;text-align:center;font-size:12px;line-height:13.8px;color:#8f8f8f;letter-spacing:0.15px;transform:rotate(-90deg);">140</span>
<span class="t" style="left:28.6px;top:431.3px;width:40px;text-align:center;font-size:12px;line-height:13.8px;color:#8f8f8f;letter-spacing:0.15px;transform:rotate(-90deg);">120</span>
<span class="t" style="left:28.6px;top:506.9px;width:40px;text-align:center;font-size:12px;line-height:13.8px;color:#8f8f8f;letter-spacing:0.15px;transform:rotate(-90deg);">100</span>
<span class="t" style="left:28.6px;top:582.5px;width:40px;text-align:center;font-size:12px;line-height:13.8px;color:#8f8f8f;letter-spacing:0.15px;transform:rotate(-90deg);">80</span>
<span class="t" style="left:28.6px;top:658.1px;width:40px;text-align:center;font-size:12px;line-height:13.8px;color:#8f8f8f;letter-spacing:0.15px;transform:rotate(-90deg);">60</span>
<span class="t" style="left:933.2px;top:253.6px;font-size:20px;line-height:23px;font-weight:bold;color:#fdfdfd;-webkit-text-stroke:1.4px #77758f;">A</span>
<span class="t" style="left:506.8px;top:74.3px;font-size:6.6px;line-height:7px;font-weight:bold;color:#fff;letter-spacing:-0.1px;">PDF</span>
</div>
</body></html>
